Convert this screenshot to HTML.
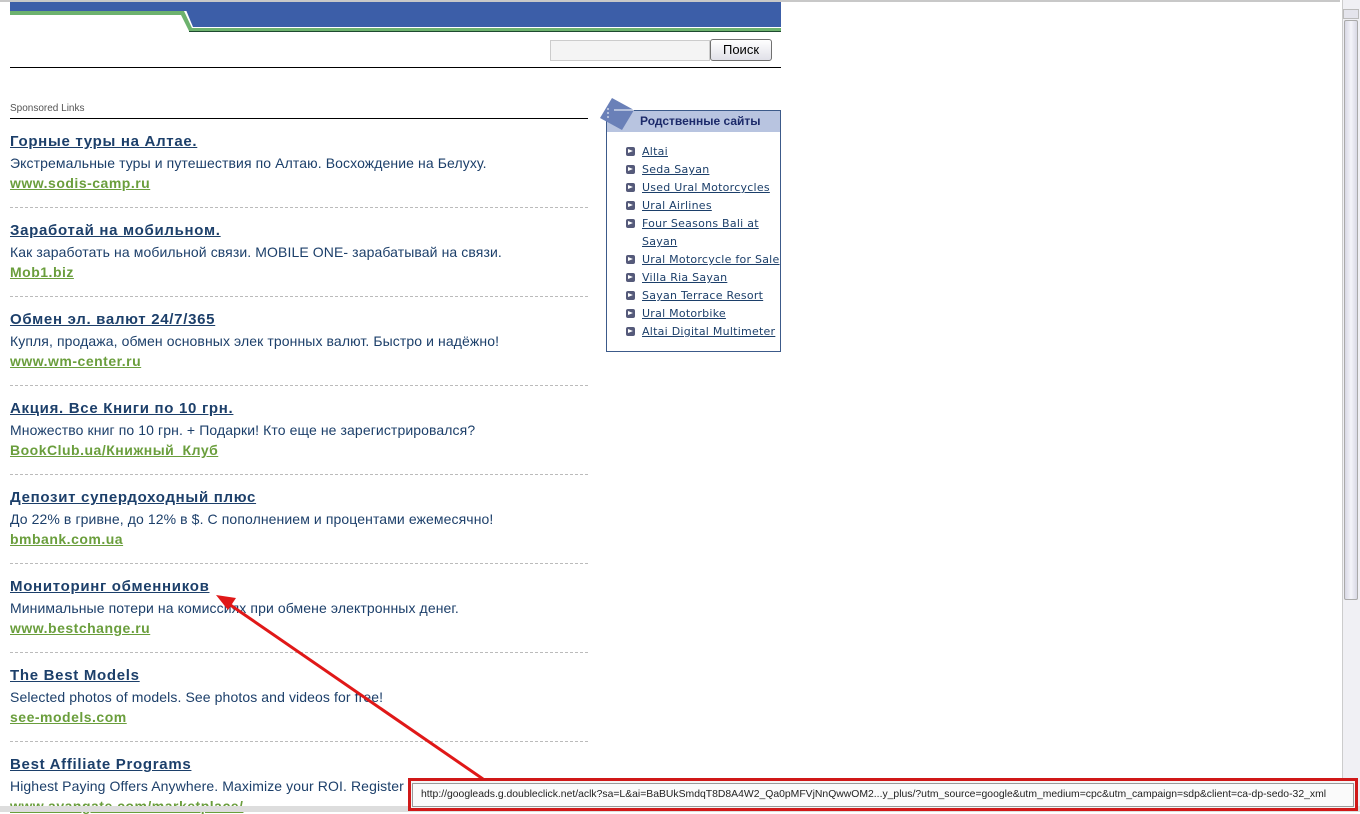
<!DOCTYPE html>
<html><head><meta charset="utf-8">
<style>
*{margin:0;padding:0;box-sizing:border-box}
body{width:1360px;height:812px;overflow:hidden;background:#fff;font-family:"Liberation Sans",sans-serif;position:relative}
.a{position:absolute}
.t{position:absolute;left:10px;font-size:15px;font-weight:bold;color:#1c3f6a;text-decoration:underline;letter-spacing:0.7px;white-space:nowrap}
.d{position:absolute;left:10px;font-size:14px;color:#1c3f6a;white-space:nowrap;letter-spacing:0.1px}
.u{position:absolute;left:10px;font-size:14px;font-weight:bold;color:#6a9e3c;text-decoration:underline;white-space:nowrap;letter-spacing:0.5px}
.sep{position:absolute;left:10px;width:578px;border-top:1px dashed #bbb}
.side li{list-style:none;font-family:"DejaVu Sans",sans-serif;font-size:11px;color:#1c3f6a;text-decoration:underline;line-height:18px;padding-left:35px;position:relative;letter-spacing:0.25px;white-space:nowrap}
.side li:before{content:"";position:absolute;left:19px;top:4px;width:9px;height:9px;background:#555a7a;border-radius:2px}
.side li:after{content:"";position:absolute;left:21px;top:6px;border-left:5px solid #fff;border-top:2.5px solid transparent;border-bottom:2.5px solid transparent}
</style></head><body>
<div class="a" style="left:0;top:0;width:1340px;height:2px;background:#c8c8c8"></div>
<svg class="a" style="left:0;top:0" width="790" height="34">
<rect x="10" y="2" width="771" height="9" fill="#3c5ea8"/>
<polygon points="186,10 781,10 781,27 193,27" fill="#3c5ea8"/>
<polygon points="10,11 184,11 192,28 781,28 781,31 189,31 181,15 10,15" fill="#6db26e"/>
<polygon points="189,31 781,31 781,32 189,32" fill="#1e4a30"/>
</svg>
<div class="a" style="left:550px;top:40px;width:160px;height:21px;border:1px solid #ccc;background:#f4f4f4"></div>
<div class="a" style="left:710px;top:39px;width:62px;height:22px;border:1px solid #707070;border-radius:3px;background:linear-gradient(#fff,#e0e0e8);font-size:13px;text-align:center;line-height:20px">Поиск</div>
<div class="a" style="left:10px;top:67px;width:771px;height:1px;background:#000"></div>
<div class="a" style="left:10px;top:103px;font-size:10px;color:#555">Sponsored Links</div>
<div class="a" style="left:10px;top:118px;width:578px;height:1px;background:#000"></div>

<div class="t" style="top:133px">Горные туры на Алтае.</div>
<div class="d" style="top:155px">Экстремальные туры и путешествия по Алтаю. Восхождение на Белуху.</div>
<div class="u" style="top:175px">www.sodis-camp.ru</div>
<div class="sep" style="top:207px"></div>
<div class="t" style="top:222px">Заработай на мобильном.</div>
<div class="d" style="top:244px">Как заработать на мобильной связи. MOBILE ONE- зарабатывай на связи.</div>
<div class="u" style="top:264px">Mob1.biz</div>
<div class="sep" style="top:296px"></div>
<div class="t" style="top:311px">Обмен эл. валют 24/7/365</div>
<div class="d" style="top:333px">Купля, продажа, обмен основных элек тронных валют. Быстро и надёжно!</div>
<div class="u" style="top:353px">www.wm-center.ru</div>
<div class="sep" style="top:385px"></div>
<div class="t" style="top:400px">Акция. Все Книги по 10 грн.</div>
<div class="d" style="top:422px">Множество книг по 10 грн. + Подарки! Кто еще не зарегистрировался?</div>
<div class="u" style="top:442px">BookClub.ua/Книжный_Клуб</div>
<div class="sep" style="top:474px"></div>
<div class="t" style="top:489px">Депозит супердоходный плюс</div>
<div class="d" style="top:511px">До 22% в гривне, до 12% в $. С пополнением и процентами ежемесячно!</div>
<div class="u" style="top:531px">bmbank.com.ua</div>
<div class="sep" style="top:563px"></div>
<div class="t" style="top:578px">Мониторинг обменников</div>
<div class="d" style="top:600px">Минимальные потери на комиссиях при обмене электронных денег.</div>
<div class="u" style="top:620px">www.bestchange.ru</div>
<div class="sep" style="top:652px"></div>
<div class="t" style="top:667px">The Best Models</div>
<div class="d" style="top:689px">Selected photos of models. See photos and videos for free!</div>
<div class="u" style="top:709px">see-models.com</div>
<div class="sep" style="top:741px"></div>
<div class="t" style="top:756px">Best Affiliate Programs</div>
<div class="d" style="top:778px">Highest Paying Offers Anywhere. Maximize your ROI. Register now!</div>
<div class="u" style="top:798px">www.avangate.com/marketplace/</div>

<div class="a side" style="left:606px;top:110px;width:175px;height:242px;border:1px solid #3c5a8a">
<div style="height:21px;background:#b8c4e0;font-size:12px;font-weight:bold;color:#1c2a6a;padding-left:33px;line-height:21px">Родственные сайты</div>
<ul style="margin-top:11px">
<li>Altai</li><li>Seda Sayan</li><li>Used Ural Motorcycles</li><li>Ural Airlines</li><li>Four Seasons Bali at<br>Sayan</li><li>Ural Motorcycle for Sale</li><li>Villa Ria Sayan</li><li>Sayan Terrace Resort</li><li>Ural Motorbike</li><li>Altai Digital Multimeter</li>
</ul></div>
<svg class="a" style="left:596px;top:96px" width="40" height="40"><polygon points="4,22 16,2 38,14 26,34" fill="#6a80b8"/><line x1="18" y1="14" x2="38" y2="14" stroke="#fff"/><line x1="12" y1="12" x2="12" y2="24" stroke="#fff" stroke-dasharray="2,2"/></svg>

<div class="a" style="left:1342px;top:0;width:18px;height:806px;background:#f0f0f4;border-left:1px solid #ccc"></div>
<div class="a" style="left:1343px;top:9px;width:16px;height:10px;background:#e4e4ec;border:1px solid #bbb"></div>
<div class="a" style="left:1344px;top:20px;width:14px;height:580px;background:linear-gradient(90deg,#d8d8e4,#f4f4fa,#d8d8e4);border:1px solid #aaa;border-radius:2px"></div>
<div class="a" style="left:0;top:806px;width:1360px;height:6px;background:#ddd"></div>

<svg class="a" style="left:0;top:0" width="1360" height="812">
<line x1="483" y1="779" x2="226" y2="602" stroke="#e01818" stroke-width="3"/>
<polygon points="216,595 236,598 228,610" fill="#e01818"/>
</svg>
<div class="a" style="left:408px;top:778px;width:950px;height:33px;border:3px solid #d01818;background:#f4f4f4"></div>
<div class="a" style="left:412px;top:783px;width:942px;height:24px;border:1px solid #999;background:#fafafa;font-size:10.4px;line-height:22px;padding-left:8px;white-space:nowrap;overflow:hidden;color:#222">http://googleads.g.doubleclick.net/aclk?sa=L&amp;ai=BaBUkSmdqT8D8A4W2_Qa0pMFVjNnQwwOM2...y_plus/?utm_source=google&amp;utm_medium=cpc&amp;utm_campaign=sdp&amp;client=ca-dp-sedo-32_xml</div>
</body></html>
